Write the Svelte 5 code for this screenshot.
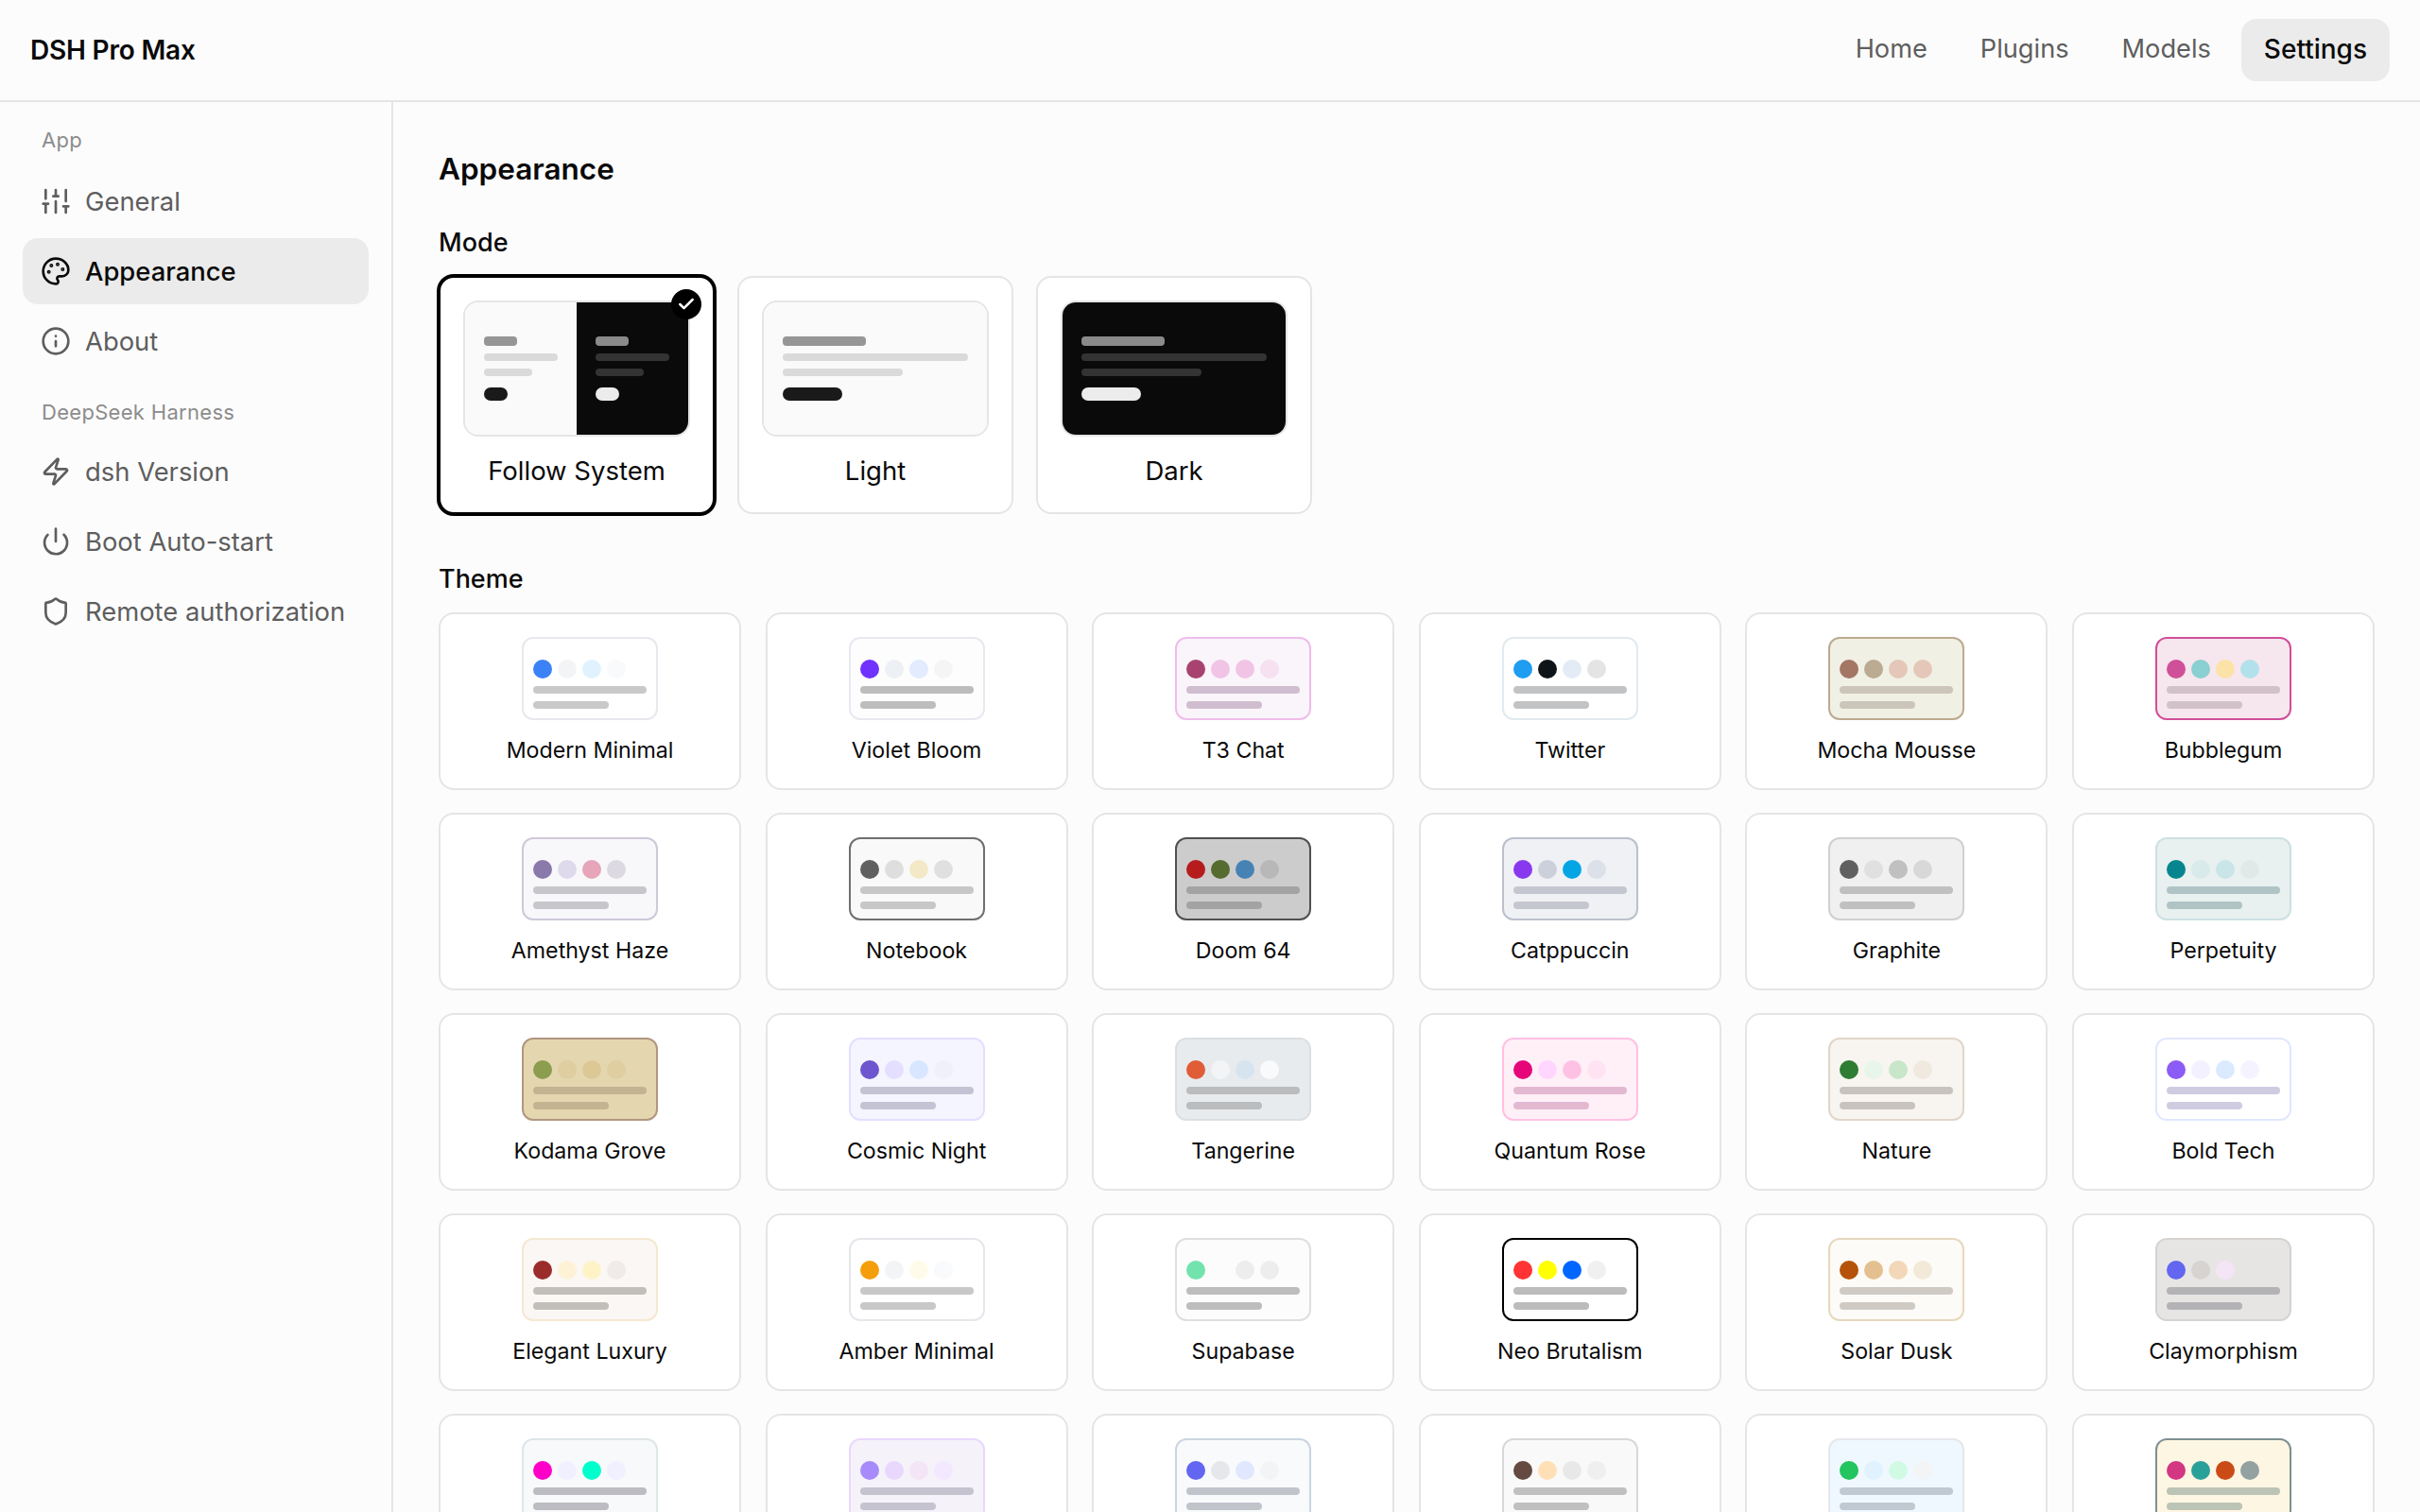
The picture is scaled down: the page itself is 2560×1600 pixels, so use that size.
<script lang="ts">
  const navLinks = ["Home", "Plugins", "Models", "Settings"];

  const sideGroups = [
    { title: "App", items: [
      { label: "General", icon: "sliders" },
      { label: "Appearance", icon: "palette", active: true },
      { label: "About", icon: "info" },
    ] },
    { title: "DeepSeek Harness", items: [
      { label: "dsh Version", icon: "zap" },
      { label: "Boot Auto-start", icon: "power" },
      { label: "Remote authorization", icon: "shield" },
    ] },
  ];

  const modes = [
    { label: "Follow System", kind: "split", selected: true },
    { label: "Light", kind: "light" },
    { label: "Dark", kind: "dark" },
  ];

  // name, background, border, four swatches, skeleton line colour
  const themes = [
    ["Modern Minimal", "#ffffff", "#e8e8ee", "#3b82f6", "#f3f4f6", "#e0f2fe", "#f9fafb", "#c9c9c9"],
    ["Violet Bloom", "#fdfdfd", "#e8e8f0", "#7033ff", "#edf0f4", "#e2ebff", "#f5f5f5", "#bdbdbd"],
    ["T3 Chat", "#faf5fa", "#efbdeb", "#a84370", "#f1c4e6", "#f1c4e6", "#f5e1f0", "#d0bdd0"],
    ["Twitter", "#ffffff", "#e1eaef", "#1e9df1", "#0f1419", "#e3ecf6", "#e4e4e4", "#c2c3c4"],
    ["Mocha Mousse", "#f1f0e5", "#bcaa8f", "#a37764", "#baab92", "#e4c7b8", "#e4c7b8", "#cbc6b9"],
    ["Bubblegum", "#f6e6ee", "#d04f99", "#d04f99", "#8acfd1", "#fbe2a7", "#b2e1eb", "#d2c1c9"],
    ["Amethyst Haze", "#f8f7fa", "#cec9d9", "#8a79ab", "#dfd9ec", "#e6a5b8", "#dcd9e3", "#c7c6cb"],
    ["Notebook", "#f9f9f9", "#6f6f6f", "#606060", "#dedede", "#f3e9c6", "#e0e0e0", "#c7c7c7"],
    ["Doom 64", "#cccccc", "#505050", "#b71c1c", "#556b2f", "#4682b4", "#b8b8b8", "#a3a3a3"],
    ["Catppuccin", "#eff1f5", "#bcc0cc", "#8839ef", "#ccd0da", "#04a5e5", "#dce0e8", "#c5c7d0"],
    ["Graphite", "#f0f0f0", "#d0d0d0", "#606060", "#e0e0e0", "#c0c0c0", "#d8d8d8", "#c0c0c0"],
    ["Perpetuity", "#e8f0f0", "#cde0e2", "#06858e", "#d9eaea", "#c9e5e7", "#e0e8e8", "#b0c4c6"],
    ["Kodama Grove", "#e4d7b0", "#b19681", "#8d9d4f", "#decea0", "#dbc894", "#decea0", "#c3b391"],
    ["Cosmic Night", "#f5f5ff", "#e4dfff", "#6e56cf", "#e4dfff", "#d8e6ff", "#f0f0fa", "#c3c3d4"],
    ["Tangerine", "#e8ebed", "#dcdfe2", "#e05d38", "#f3f4f6", "#d6e4f0", "#f9fafb", "#bbbcbe"],
    ["Quantum Rose", "#fff0f8", "#ffc0e4", "#e6067a", "#ffd6ff", "#ffc1e3", "#ffe3f2", "#e3b9d2"],
    ["Nature", "#f8f5f0", "#e0d6c9", "#2e7d32", "#e8f5e9", "#c8e6c9", "#f0e9e0", "#c9c3bd"],
    ["Bold Tech", "#ffffff", "#e0e7ff", "#8b5cf6", "#f3f0ff", "#dbeafe", "#f5f3ff", "#cfcce2"],
    ["Elegant Luxury", "#faf7f5", "#f5e8d2", "#9b2c2c", "#fdf2d6", "#fef3c7", "#f0ebe8", "#c2bfbb"],
    ["Amber Minimal", "#ffffff", "#e5e7eb", "#f59e0b", "#f3f4f6", "#fffbeb", "#f9fafb", "#c8c8c8"],
    ["Supabase", "#fcfcfc", "#dfdfdf", "#72e3ad", "#fcfcfc", "#ededed", "#ededed", "#bdbdbd"],
    ["Neo Brutalism", "#ffffff", "#000000", "#ff3333", "#ffff00", "#0066ff", "#f0f0f0", "#bcbcbc"],
    ["Solar Dusk", "#fdfbf7", "#e6d8bf", "#b45309", "#e4c090", "#f2d8b8", "#f3e9d8", "#d0cac5"],
    ["Claymorphism", "#e7e5e4", "#d6d3d1", "#6366f1", "#d6d3d1", "#f3e5f5", "#e7e5e4", "#b3b3b6"],
    ["Cyberpunk", "#f8f9fa", "#dee6e8", "#ff00c8", "#f0f0ff", "#00ffcc", "#f0f0ff", "#bcbcc2"],
    ["Pastel Dreams", "#f6f2fa", "#e9d8fd", "#a78bfa", "#e9d8fd", "#f3e5f5", "#f3e8ff", "#c5c3cf"],
    ["Clean Slate", "#f8fafc", "#cbd5e1", "#6366f1", "#e5e7eb", "#e0e7ff", "#f3f4f6", "#c2c4cc"],
    ["Caffeine", "#f9f9f9", "#d8d8d8", "#644a40", "#ffdfb5", "#e8e8e8", "#efefef", "#c0c0c0"],
    ["Ocean Breeze", "#f0f8ff", "#e5e7eb", "#22c55e", "#e0f2fe", "#d1fae5", "#f3f4f6", "#c0c8d2"],
    ["Retro Arcade", "#fdf6e3", "#7f9090", "#d33682", "#2aa198", "#cb4b16", "#93a1a1", "#bcc4b6"],
  ];
</script>

{#snippet icon(name: string)}
  <svg class="side-icon" viewBox="0 0 24 24" fill="none" stroke="currentColor" stroke-width="2" stroke-linecap="round" stroke-linejoin="round" aria-hidden="true">
    {#if name === "sliders"}
      <path d="M4 21v-7M4 10V3M12 21v-9M12 8V3M20 21v-5M20 12V3M2 14h4M10 8h4M18 16h4" />
    {:else if name === "palette"}
      <path d="M12 22a1 1 0 0 1 0-20 10 9 0 0 1 10 9 5 5 0 0 1-5 5h-2.25a1.75 1.75 0 0 0-1.4 2.8l.3.4a1.75 1.75 0 0 1-1.4 2.8z" />
      <circle cx="13.5" cy="6.5" r=".5" fill="currentColor" />
      <circle cx="17.5" cy="10.5" r=".5" fill="currentColor" />
      <circle cx="6.5" cy="12.5" r=".5" fill="currentColor" />
      <circle cx="8.5" cy="7.5" r=".5" fill="currentColor" />
    {:else if name === "info"}
      <circle cx="12" cy="12" r="10" />
      <path d="M12 16v-4M12 8h.01" />
    {:else if name === "zap"}
      <path d="M4 14a1 1 0 0 1-.78-1.63l9.9-10.2a.5.5 0 0 1 .86.46l-1.92 6.02A1 1 0 0 0 13 10h7a1 1 0 0 1 .78 1.63l-9.9 10.2a.5.5 0 0 1-.86-.46l1.92-6.02A1 1 0 0 0 11 14z" />
    {:else if name === "power"}
      <path d="M12 2v10M18.4 6.6a9 9 0 1 1-12.77.04" />
    {:else}
      <path d="M20 13c0 5-3.5 7.5-7.66 8.95a1 1 0 0 1-.67-.01C7.5 20.5 4 18 4 13V6a1 1 0 0 1 1-1c2 0 4.5-1.2 6.24-2.72a1.17 1.17 0 0 1 1.52 0C14.51 3.81 17 5 19 5a1 1 0 0 1 1 1z" />
    {/if}
  </svg>
{/snippet}

{#snippet skeleton(tone: string)}
  <div class="pane {tone}">
    <span class="sk-title"></span>
    <span class="sk-line"></span>
    <span class="sk-line short"></span>
    <span class="sk-btn"></span>
  </div>
{/snippet}

<div class="app">
  <header class="topbar">
    <div class="brand">DSH Pro Max</div>
    <nav class="topnav">
      {#each navLinks as link}
        <a href="#top" class:current={link === "Settings"}>{link}</a>
      {/each}
    </nav>
  </header>

  <div class="body">
    <aside class="sidebar">
      {#each sideGroups as group}
        <div class="side-group">
          <div class="side-title">{group.title}</div>
          {#each group.items as item}
            <button type="button" class="side-item" class:active={item.active}>
              {@render icon(item.icon)}
              <span>{item.label}</span>
            </button>
          {/each}
        </div>
      {/each}
    </aside>

    <main class="content">
      <h1>Appearance</h1>

      <h2>Mode</h2>
      <div class="mode-grid">
        {#each modes as mode}
          <button type="button" class="mode-card" class:selected={mode.selected}>
            <div class="mode-preview" class:split={mode.kind === "split"}>
              {#if mode.kind === "split"}
                {@render skeleton("light")}
                {@render skeleton("dark")}
              {:else}
                {@render skeleton(mode.kind)}
              {/if}
            </div>
            <span class="mode-label">{mode.label}</span>
            {#if mode.selected}
              <span class="badge">
                <svg viewBox="0 0 24 24" fill="none" stroke="currentColor" stroke-width="3" stroke-linecap="round" stroke-linejoin="round" aria-hidden="true">
                  <path d="M20 6 9 17l-5-5" />
                </svg>
              </span>
            {/if}
          </button>
        {/each}
      </div>

      <h2 class="theme-heading">Theme</h2>
      <div class="theme-grid">
        {#each themes as [name, bg, border, d1, d2, d3, d4, line]}
          <button type="button" class="theme-card">
            <div class="thumb" style="background:{bg};border-color:{border};--line:{line}">
              <div class="dots">
                {#each [d1, d2, d3, d4] as dot}
                  <i style="background:{dot}"></i>
                {/each}
              </div>
              <span class="thumb-line"></span>
              <span class="thumb-line short"></span>
            </div>
            <span class="theme-name">{name}</span>
          </button>
        {/each}
      </div>
    </main>
  </div>
</div>

<style>
  :global(body) {
    background: #fcfcfc;
    color: #0a0a0a;
    font-family: Inter, "Liberation Sans", sans-serif;
  }

  button {
    font: inherit;
    color: inherit;
    cursor: pointer;
  }

  .app {
    display: flex;
    flex-direction: column;
    height: 100vh;
    overflow: hidden;
  }

  .topbar {
    flex: none;
    display: flex;
    align-items: center;
    justify-content: space-between;
    height: 106px;
    padding: 0 32px;
    border-bottom: 2px solid #e5e5e5;
  }

  .brand {
    font-size: 28px;
    font-weight: 600;
    letter-spacing: -0.2px;
  }

  .topnav {
    display: flex;
    gap: 8px;
  }

  .topnav a {
    padding: 0 24px;
    height: 66px;
    line-height: 64px;
    border-radius: 16px;
    font-size: 27.2px;
    color: #5e5e5e;
    text-decoration: none;
  }

  .topnav a.current {
    background: #ebebeb;
    color: #0a0a0a;
    font-size: 28px;
    font-weight: 500;
  }

  .body {
    flex: 1;
    display: flex;
    min-height: 0;
  }

  .sidebar {
    flex: none;
    width: 414px;
    box-sizing: content-box;
    padding: 24px 0;
    border-right: 2px solid #e5e5e5;
  }

  .side-group {
    display: flex;
    flex-direction: column;
    gap: 4px;
    margin: 0 24px 24px;
  }

  .side-title {
    height: 32px;
    line-height: 32px;
    padding-left: 20px;
    margin-bottom: 8px;
    font-size: 22px;
    letter-spacing: 0.3px;
    color: #8c8c8c;
  }

  .side-group:first-child .side-title {
    margin-bottom: 10px;
  }

  .side-item {
    display: flex;
    align-items: center;
    gap: 15px;
    height: 70px;
    padding: 0 19px;
    border: 0;
    border-radius: 16px;
    background: none;
    font-size: 27.4px;
    color: #5e5e5e;
    text-align: left;
    white-space: nowrap;
  }

  .side-item.active {
    background: #ebebeb;
    color: #0a0a0a;
    font-weight: 500;
  }

  .side-icon {
    flex: none;
    width: 32px;
    height: 32px;
  }

  .content {
    flex: 1;
    min-width: 0;
    padding: 48px;
    overflow: hidden;
  }

  h1 {
    margin: 0 0 35px;
    padding-top: 1px;
    font-size: 31.5px;
    line-height: 44px;
    font-weight: 600;
  }

  h2 {
    margin: 0 0 14px;
    font-size: 27px;
    line-height: 42px;
    font-weight: 500;
  }

  .theme-heading {
    margin-top: 48px;
  }

  .mode-grid {
    display: flex;
    gap: 24px;
  }

  .mode-card {
    position: relative;
    flex: none;
    display: flex;
    flex-direction: column;
    width: 292px;
    height: 252px;
    padding: 24px;
    border: 2px solid #e5e5e5;
    border-radius: 16px;
    background: #fff;
  }

  .mode-card.selected {
    border-color: #000;
    box-shadow: 0 0 0 2px #000;
  }

  .mode-preview {
    flex: none;
    display: flex;
    box-sizing: border-box;
    width: 240px;
    height: 144px;
    border: 2px solid #e5e5e5;
    border-radius: 16px;
    overflow: hidden;
  }

  .pane {
    flex: 1 1 0;
    min-width: 0;
    display: flex;
    flex-direction: column;
    justify-content: center;
    align-items: flex-start;
    padding: 0 20px;
  }

  .pane.light {
    background: #fafafa;
    --title: #969696;
    --line: #dadada;
    --btn: #1a1a1a;
  }

  .pane.dark {
    background: #0a0a0a;
    --title: #8a8a8a;
    --line: #333333;
    --btn: #ececec;
  }

  .sk-title {
    width: 45%;
    height: 10px;
    border-radius: 4px;
    background: var(--title);
  }

  .sk-line {
    width: 100%;
    height: 8px;
    margin-top: 8px;
    border-radius: 4px;
    background: var(--line);
  }

  .sk-line.short {
    width: 65%;
  }

  .sk-btn {
    width: 32%;
    height: 14px;
    margin-top: 12px;
    border-radius: 7px;
    background: var(--btn);
  }

  .mode-label {
    margin-top: 16px;
    font-size: 27.5px;
    line-height: 40px;
    text-align: center;
  }

  .badge {
    position: absolute;
    top: 12px;
    right: 12px;
    display: flex;
    align-items: center;
    justify-content: center;
    width: 32px;
    height: 32px;
    border-radius: 50%;
    background: #000;
    color: #fff;
  }

  .badge svg {
    width: 20px;
    height: 20px;
  }

  .theme-grid {
    display: grid;
    grid-template-columns: repeat(6, 320px);
    justify-content: space-between;
    row-gap: 24px;
  }

  .theme-card {
    display: flex;
    flex-direction: column;
    align-items: center;
    height: 188px;
    padding: 24px 12px;
    border: 2px solid #e5e5e5;
    border-radius: 16px;
    background: #fff;
  }

  .thumb {
    display: flex;
    flex-direction: column;
    justify-content: flex-end;
    gap: 8px;
    width: 144px;
    height: 88px;
    padding: 0 10px 10px;
    border: 2px solid;
    border-radius: 12px;
    box-sizing: border-box;
    flex: none;
  }

  .dots {
    display: flex;
    gap: 6px;
  }

  .dots i {
    width: 20px;
    height: 20px;
    border-radius: 50%;
  }

  .thumb-line {
    height: 8px;
    border-radius: 4px;
    background: var(--line);
  }

  .thumb-line.short {
    width: 66.6%;
  }

  .theme-name {
    margin-top: 16px;
    font-size: 23.2px;
    line-height: 32px;
  }
</style>
